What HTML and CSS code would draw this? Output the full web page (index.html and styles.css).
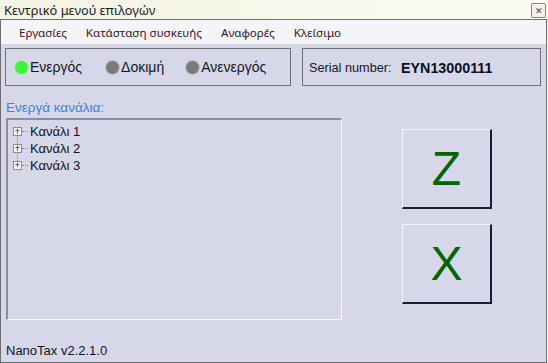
FILE: index.html
```html
<!DOCTYPE html>
<html lang="el">
<head>
    <meta charset="UTF-8">
    <title>Κεντρικό μενού επιλογών</title>
    <link rel="stylesheet" href="styles.css">
</head>
<body>
    <div class="titlebar">
        <span class="title">Κεντρικό μενού επιλογών</span>
        <span class="close">&#x2715;</span>
    </div>
    <div class="frame">
        <div class="menubar">
            <span class="menu-item">Εργασίες</span>
            <span class="menu-item">Κατάσταση συσκευής</span>
            <span class="menu-item">Αναφορές</span>
            <span class="menu-item">Κλείσιμο</span>
        </div>
        <div class="content">
            <div class="status-row">
                <div class="group states">
                    <span class="state"><span class="led on"></span>Ενεργός</span>
                    <span class="state"><span class="led"></span>Δοκιμή</span>
                    <span class="state"><span class="led"></span>Ανενεργός</span>
                </div>
                <div class="group serial">
                    <span class="serial-label">Serial number:</span>
                    <span class="serial-value">EYN13000111</span>
                </div>
            </div>
            <div class="main-row">
                <div class="channels">
                    <div class="channels-label">Ενεργά κανάλια:</div>
                    <div class="tree">
                        <div class="node"><span class="expander">+</span><span class="dots"></span>Κανάλι 1</div>
                        <div class="node"><span class="expander">+</span><span class="dots"></span>Κανάλι 2</div>
                        <div class="node"><span class="expander">+</span><span class="dots"></span>Κανάλι 3</div>
                    </div>
                </div>
                <div class="actions">
                    <button class="big-btn">Z</button>
                    <button class="big-btn">X</button>
                </div>
            </div>
            <div class="footer">NanoTax v2.2.1.0</div>
        </div>
    </div>
</body>
</html>
```

FILE: styles.css
```css
body {
    margin: 0;
    width: 548px;
    height: 363px;
    overflow: hidden;
    background-color: #f7f6ea;
    font-family: "Liberation Sans", Arial, sans-serif;
}

.titlebar {
    height: 19px;
    display: flex;
    align-items: center;
    justify-content: space-between;
    padding-left: 4px;
    background: linear-gradient(to right, #f4f3e4, #fbfbf2);
    font-family: "Noto Sans", sans-serif;
    font-size: 12.8px;
    color: #1c1c1c;
}

.close {
    width: 13px;
    height: 13px;
    margin-right: 2px;
    margin-top: 1px;
    border: 1px solid #86867c;
    border-radius: 2px;
    font-size: 9px;
    line-height: 13px;
    text-align: center;
    color: #3c3c3c;
    background-color: #f2f2ea;
}

.frame {
    width: 545px;
    height: 342px;
    border: 1px solid #6e6e6e;
    display: flex;
    flex-direction: column;
}

.menubar {
    height: 24px;
    display: flex;
    align-items: center;
    gap: 19px;
    padding-left: 18px;
    background-color: #f5f5f7;
    font-family: "Noto Sans", sans-serif;
    font-size: 11.6px;
    color: #3a1232;
}

.content {
    flex: 1;
    background-color: #d6d7e9;
    padding: 4px 5px 0 4px;
    display: flex;
    flex-direction: column;
    font-size: 13px;
}

.status-row {
    display: flex;
    gap: 11px;
}

.group {
    border: 1px solid #707070;
    display: flex;
    align-items: center;
    box-sizing: border-box;
    height: 38px;
    white-space: nowrap;
}

.states {
    width: 286px;
    padding-left: 8px;
}

.state {
    display: flex;
    align-items: center;
    color: #141428;
    font-size: 14px;
}

.state:nth-child(2) { margin-left: 23px; }
.state:nth-child(3) { margin-left: 21px; }

.led {
    width: 13px;
    height: 13px;
    border-radius: 50%;
    border: 1px solid #c9c9c9;
    background-color: #7a7a7a;
    margin-right: 1px;
}

.led.on {
    background-color: #3ef23e;
    border-color: #c4e8c4;
}

.serial {
    width: 239px;
    padding-left: 6px;
    padding-top: 2px;
}

.serial-label {
    color: #141428;
    font-size: 12.7px;
    flex: 0 0 92px;
}

.serial-value {
    font-weight: bold;
    font-size: 14.3px;
    color: #0c0c1e;
}

.main-row {
    display: flex;
    margin-top: 14px;
}

.channels {
    width: 336px;
    margin-left: 1px;
}

.channels-label {
    color: #3a82dc;
    font-size: 13.5px;
    line-height: 15px;
}

.tree {
    margin-top: 3px;
    height: 196px;
    border-top: 2px solid #8e8e98;
    border-left: 2px solid #8e8e98;
    border-bottom: 1px solid #fbfbff;
    border-right: 1px solid #fbfbff;
    padding-top: 3px;
}

.node {
    position: relative;
    height: 17px;
    display: flex;
    align-items: center;
    color: #121226;
    padding-left: 5px;
}

.node + .node::before {
    content: "";
    position: absolute;
    left: 9px;
    top: -9px;
    height: 13px;
    border-left: 1px dotted #8a8a8a;
}

.expander {
    width: 7px;
    height: 7px;
    border: 1px solid #8c8c8c;
    background-color: #f4f4f4;
    font-size: 9px;
    line-height: 7px;
    text-align: center;
    color: #202020;
}

.dots {
    width: 6px;
    border-top: 1px dotted #8a8a8a;
    margin-right: 2px;
}

.actions {
    margin-left: 60px;
    margin-top: 29px;
    display: flex;
    flex-direction: column;
    gap: 15px;
}

.big-btn {
    width: 90px;
    height: 80px;
    padding: 0;
    background-color: #d6d7e9;
    border-top: 1px solid #f4f4fb;
    border-left: 1px solid #f4f4fb;
    border-right: 2px solid #1c1c34;
    border-bottom: 2px solid #1c1c34;
    font-family: "Liberation Sans", Arial, sans-serif;
    font-size: 48px;
    color: #006400;
}

.footer {
    margin-top: 23px;
    padding-left: 1px;
    color: #141030;
}
```
